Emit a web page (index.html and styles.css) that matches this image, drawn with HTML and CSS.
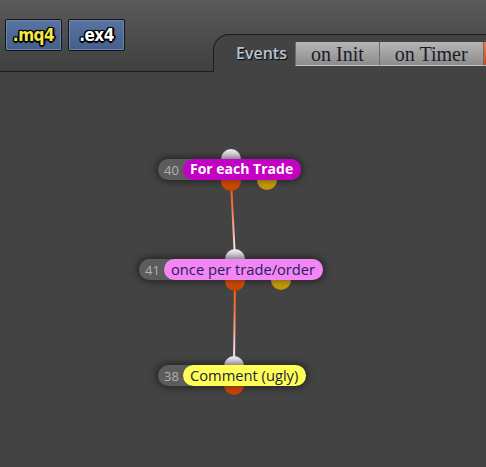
FILE: index.html
```html
<!DOCTYPE html>
<html lang="en">
<head>
  <meta charset="UTF-8" />
  <title>Strategy Editor</title>
  <link rel="stylesheet" href="styles.css">
</head>
<body>

  <div class="topbar">
    <div class="files">
      <button class="file mq4">.mq4</button>
      <button class="file ex4">.ex4</button>
    </div>
    <div class="tabs">
      <span class="tabs-title">Events</span>
      <button class="tab">on Init</button>
      <button class="tab">on Timer</button>
      <span class="tab tab-hot"></span>
    </div>
  </div>

  <div class="canvas">
    <svg class="wires" width="486" height="395">
      <defs>
        <linearGradient id="w1" gradientUnits="userSpaceOnUse" x1="0" y1="109" x2="0" y2="187">
          <stop offset="0" stop-color="#ff5a00" />
          <stop offset="0.35" stop-color="#f07040" />
          <stop offset="0.8" stop-color="#f4d8dc" />
          <stop offset="1" stop-color="#f6f0f6" />
        </linearGradient>
        <linearGradient id="w2" gradientUnits="userSpaceOnUse" x1="0" y1="208" x2="0" y2="293">
          <stop offset="0" stop-color="#ff5a00" />
          <stop offset="0.35" stop-color="#f07040" />
          <stop offset="0.8" stop-color="#f4d8dc" />
          <stop offset="1" stop-color="#f6f0f6" />
        </linearGradient>
      </defs>
      <line x1="231" y1="109" x2="235" y2="187" stroke="url(#w1)" stroke-width="2" />
      <line x1="235" y1="208" x2="234" y2="293" stroke="url(#w2)" stroke-width="2" />
    </svg>

    <div class="node n1">
      <span class="port in"></span>
      <span class="port out"></span>
      <span class="port alt"></span>
      <div class="pill">
        <span class="num">40</span>
        <span class="label purple">For each Trade</span>
      </div>
    </div>

    <div class="node n2">
      <span class="port in"></span>
      <span class="port out"></span>
      <span class="port alt"></span>
      <div class="pill">
        <span class="num">41</span>
        <span class="label pink">once per trade/order</span>
      </div>
    </div>

    <div class="node n3">
      <span class="port in"></span>
      <span class="port out"></span>
      <div class="pill">
        <span class="num">38</span>
        <span class="label yellow">Comment (ugly)</span>
      </div>
    </div>
  </div>

</body>
</html>
```

FILE: styles.css
```css
body {
  margin: 0;
  background-color: #434343;
  font-family: "Open Sans", Arial, sans-serif;
  overflow: hidden;
}

.topbar {
  display: flex;
  height: 72px;
  background: linear-gradient(#5a5a5a, #3f3f3f);
}

.files {
  display: flex;
  align-items: flex-start;
  gap: 6px;
  width: 213px;
  padding: 19px 0 0 5px;
  box-sizing: border-box;
  border-bottom: 1px solid #1c1c1c;
}

.file {
  width: 57px;
  height: 32px;
  padding: 0;
  border: 1px solid #141414;
  border-radius: 2px;
  background: linear-gradient(#5874a2, #465f8a);
  box-shadow: inset 0 0 0 1px #6b86b3;
  font-family: "DejaVu Sans Condensed", "DejaVu Sans", sans-serif;
  font-stretch: condensed;
  font-weight: bold;
  font-size: 17px;
  letter-spacing: -0.5px;
  text-shadow: 1px 1px 0 #000, -1px -1px 0 #000, 1px -1px 0 #000, -1px 1px 0 #000,
    0 2px 1px #000, 2px 0 1px #000, 0 -1px 1px #000, -1px 0 1px #000;
}

.mq4 {
  color: #f4e844;
}

.ex4 {
  color: #ffffff;
}

.tabs {
  flex: 1;
  display: flex;
  align-items: flex-start;
  margin-top: 34px;
  padding-left: 22px;
  border-top: 1px solid #1c1c1c;
  border-left: 1px solid #1c1c1c;
  border-top-left-radius: 16px;
  background-color: #434343;
  white-space: nowrap;
  overflow: hidden;
}

.tabs-title {
  margin-top: 7px;
  margin-right: 8px;
  font-size: 16px;
  font-weight: 600;
  color: #b6c4d6;
  text-shadow: 1px 1px 1px #000;
}

.tab {
  flex: none;
  height: 24px;
  margin-top: 7px;
  padding: 0 15px;
  border: none;
  border-left: 1px solid #6c6c6c;
  border-bottom: 1px solid #c6c6c6;
  background: linear-gradient(#b6b6b6, #8c8c8c);
  font-family: "Liberation Serif", "Times New Roman", serif;
  font-size: 20px;
  line-height: 22px;
  color: #1a1a28;
}

.tab-hot {
  width: 20px;
  padding: 0;
  box-sizing: border-box;
  background: linear-gradient(#f08050, #c84a18);
}

.canvas {
  position: relative;
  height: 395px;
}

.wires {
  position: absolute;
  left: 0;
  top: 0;
}

.node {
  position: absolute;
}

.n1 { left: 158px; top: 87px; }
.n2 { left: 139px; top: 187px; }
.n3 { left: 158px; top: 293px; }

.pill {
  position: relative;
  display: flex;
  align-items: center;
  height: 21px;
  border-radius: 11px;
  background-color: #5c5c5c;
  box-shadow: 0 0 7px 2px rgba(0, 0, 0, 0.45);
}

.num {
  width: 25px;
  padding-left: 6px;
  box-sizing: border-box;
  font-size: 13px;
  color: #b2b2b2;
}

.label {
  height: 21px;
  padding: 0 8px 0 7px;
  border-radius: 11px;
  font-size: 14.7px;
  line-height: 20px;
}

.purple {
  background-color: #c400c4;
  color: #ffffff;
  font-weight: bold;
  font-size: 14px;
}

.pink {
  background-color: #f485f4;
  color: #22225a;
}

.yellow {
  background-color: #ffff55;
  color: #22223a;
}

.port {
  position: absolute;
  width: 20px;
  height: 20px;
  border-radius: 50%;
}

.in {
  top: -10px;
  background: linear-gradient(#f0ecf4, #b2aabe);
}

.out {
  top: 12px;
  background: linear-gradient(#ff6c12, #c44000);
}

.alt {
  top: 11px;
  background: linear-gradient(#f2c828, #c49400);
}

.n1 .in, .n1 .out { left: 63px; }
.n1 .alt { left: 99px; }

.n2 .in, .n2 .out { left: 86px; }
.n2 .alt { left: 132px; }

.n3 .in { left: 66px; top: -9px; }
.n3 .out { left: 66px; top: 10px; }
```
